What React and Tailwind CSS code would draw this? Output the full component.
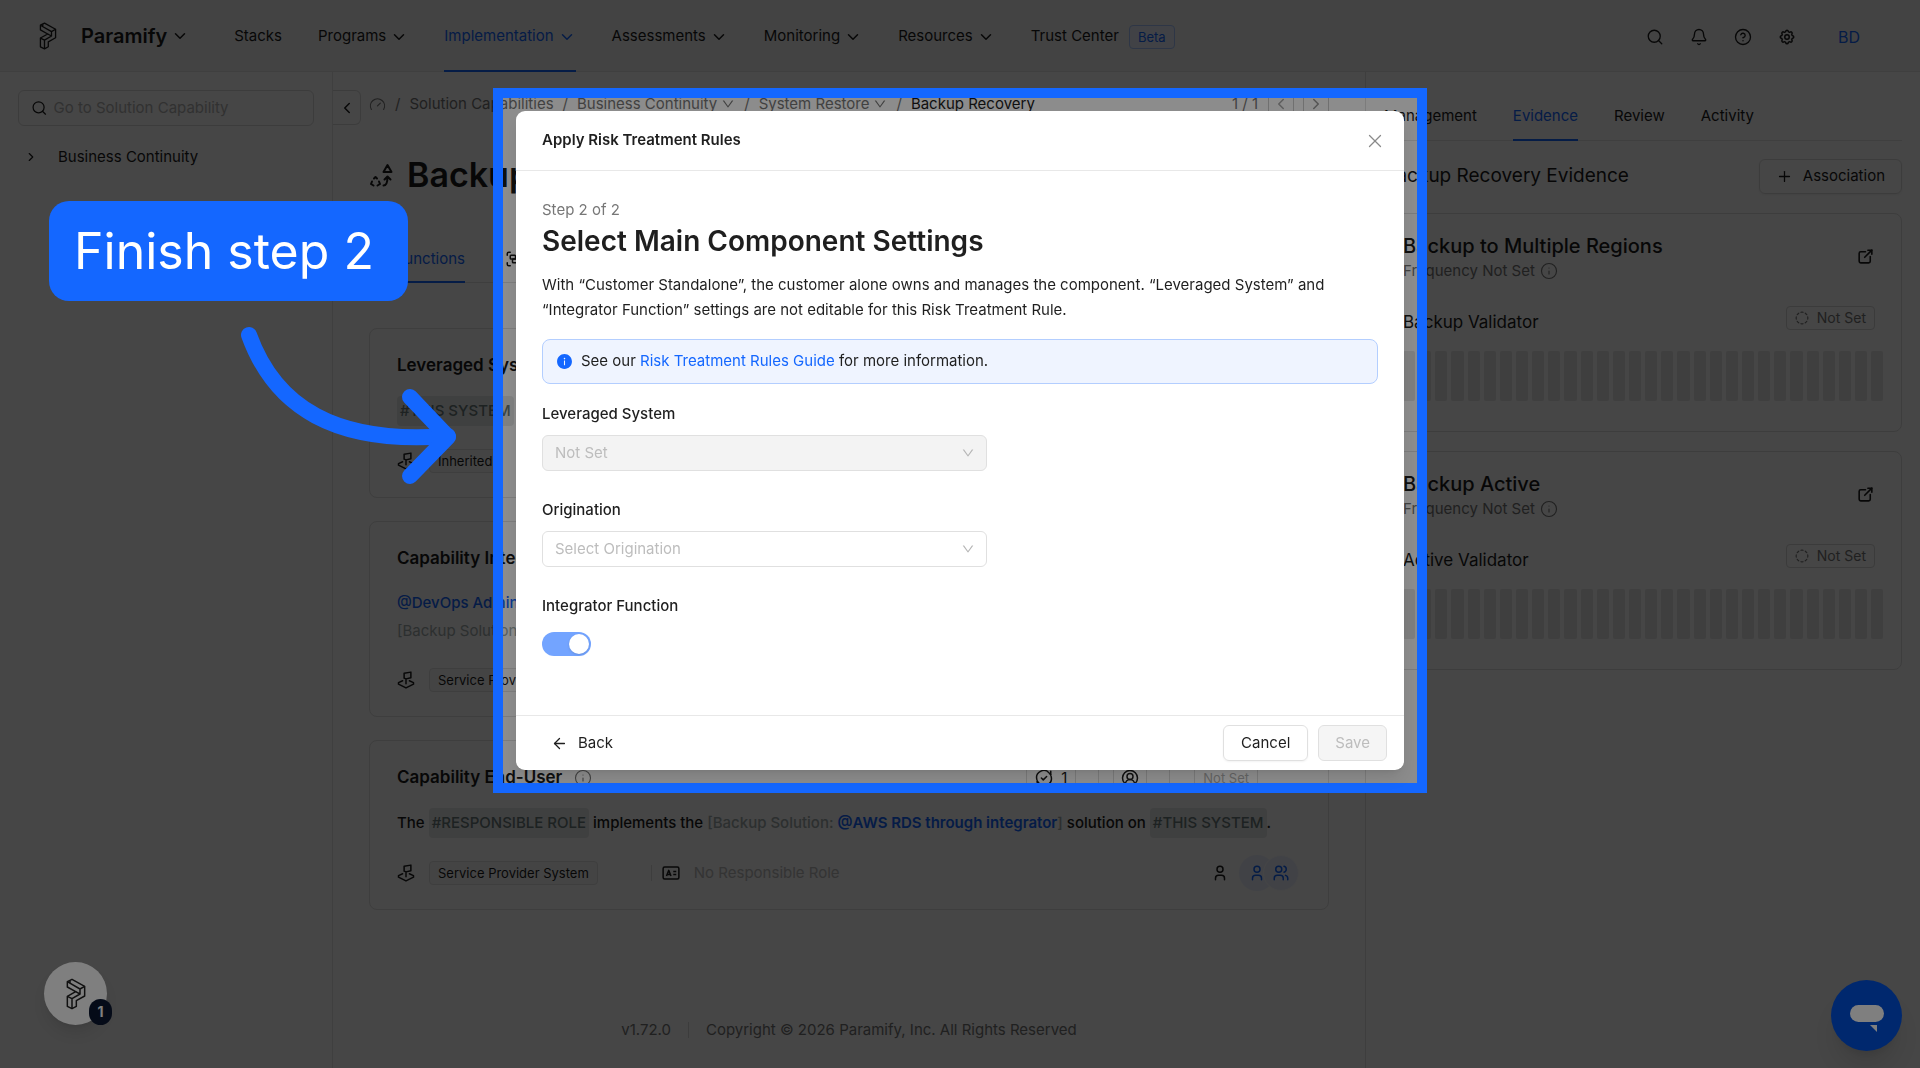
import {
  Bell,
  ChevronDown,
  ChevronLeft,
  ChevronRight,
  CircleDashed,
  CircleHelp,
  CircleUserRound,
  Gauge,
  Group,
  Info,
  Plus,
  Search,
  ArrowLeft,
  X,
} from "lucide-react";
import { AiFillInfoCircle, AiOutlineDown } from "react-icons/ai";
import { TbExternalLink, TbSettings, TbUser, TbUsers } from "react-icons/tb";

const NAV = [
  { label: "Stacks" },
  { label: "Programs", menu: true },
  { label: "Implementation", menu: true, active: true },
  { label: "Assessments", menu: true },
  { label: "Monitoring", menu: true },
  { label: "Resources", menu: true },
];

const EVIDENCE = [
  { title: "Backup to Multiple Regions", validator: "Backup Validator" },
  { title: "Backup Active", validator: "Active Validator" },
];

const BARS = Array.from({ length: 30 }, (_, i) => i);

const Logo = ({ className }) => (
  <svg
    viewBox="200 173 60 96"
    fill="none"
    stroke="currentColor"
    strokeWidth="4.5"
    strokeLinejoin="round"
    className={className}
  >
    <path d="M218 177 256 198V227L231 241V258L218 265 204 258V228L229 214 204 200V184Z" />
    <path d="M204 184 242 206 256 198M242 206V221L218 235 204 228M218 235V265M212 181 212 188M229 214 242 221" />
  </svg>
);

const HexFlag = () => (
  <svg
    viewBox="0 0 24 24"
    fill="none"
    stroke="currentColor"
    strokeWidth="2"
    strokeLinecap="round"
    strokeLinejoin="round"
    className="size-[18px] shrink-0"
  >
    <path d="M7.500 13 2 15.500V17.500L12 22.500 22 17.500V15.500L16.500 13" />
    <path d="M12 17V10.500L9.500 9.500V3L18.500 1.500V9L12 10.500" />
  </svg>
);

const ShapesIcon = () => (
  <svg
    viewBox="0 0 24 24"
    fill="none"
    stroke="currentColor"
    strokeWidth="2"
    strokeLinecap="round"
    strokeLinejoin="round"
    className="mr-1 size-6 shrink-0"
  >
    <path d="M18.500 2 22.500 9H14.500Z" />
    <path d="M5 15.500 6.500 14 8 15.500M3 18.500 2 21 4.500 22.500M10 18.500 11 21 8.500 22.500" />
    <path d="M14.500 22.500C18 22.500 18.500 19 18.500 14M15.500 16.500 18.500 13.500 21.500 16.500" />
  </svg>
);

const CycleCheck = () => (
  <svg
    viewBox="0 0 24 24"
    fill="none"
    stroke="currentColor"
    strokeWidth="2"
    strokeLinecap="round"
    strokeLinejoin="round"
    className="size-[18px]"
  >
    <path d="M2.500 14A9.500 9.500 0 0 1 19 5.500L21 8M21.500 10A9.500 9.500 0 0 1 5 18.500L3 16" />
    <path d="M21 3V8M3 21V16M8.500 12 11 14.500 15.500 10" />
  </svg>
);

const RoleCard = () => (
  <svg
    viewBox="0 0 24 24"
    fill="none"
    stroke="currentColor"
    strokeWidth="2"
    strokeLinejoin="round"
    className="size-[18px] shrink-0"
  >
    <rect x="1.500" y="4" width="21" height="16" rx="2" />
    <path d="M6 16 9 8.500 12 16M7 14H11M15 10H19M15 14H19" />
  </svg>
);

const Token = ({ children }) => (
  <span className="inline-block h-[30px] rounded bg-[#e8eaea] px-[3px] leading-[30px] text-[#6b7c7c]">
    {children}
  </span>
);

const Card = ({ title, info, tools, children, tag, extra }) => (
  <section className="rounded-lg border border-[#e2e2e2] px-[27px] pt-[23px] pb-6">
    <div className="flex h-7 items-center">
      <h3 className="text-[17px] font-semibold">{title}</h3>
      {info && <Info className="ml-3 size-[18px] text-[#777]" strokeWidth={1.5} />}
      {tools}
    </div>
    <div className="mt-4 font-medium leading-7">{children}</div>
    <div className="mt-[23px] flex h-6 items-center">
      <HexFlag />
      <span className="ml-[14px] rounded border border-[#e2e2e2] bg-[#fafafa] px-2 text-[13px] leading-[22px]">
        {tag}
      </span>
      {extra}
    </div>
  </section>
);

const CardTools = () => (
  <div className="mr-[43px] ml-auto flex items-center">
    <span className="flex h-[26px] items-center gap-2 rounded border border-[#ddd] px-2">
      <CycleCheck />1
    </span>
    <span className="ml-[22px] h-6 w-px bg-[#ddd]" />
    <span className="ml-[14px] flex h-[26px] items-center rounded border border-[#ddd] px-[7px]">
      <CircleUserRound className="size-[18px]" />
    </span>
    <span className="ml-[22px] h-6 w-px bg-[#ddd]" />
    <span className="ml-6 rounded border border-[#ddd] px-2 text-[13px] leading-6 text-[#b5b5b5]">
      Not Set
    </span>
  </div>
);

const RoleRow = () => (
  <>
    <span className="ml-[53px] h-4 w-px bg-[#e0e0e0]" />
    <span className="ml-2.5">
      <RoleCard />
    </span>
    <span className="ml-[14px] text-[15px] text-[#bdbdbd]">No Responsible Role</span>
    <TbUser className="mr-[10px] ml-auto size-[18px]" />
    <span className="flex size-9 items-center justify-center rounded-full bg-[#eef3ff] text-[#1467ff]">
      <TbUser className="size-[18px]" />
    </span>
    <span className="mr-0.5 -ml-3 flex size-9 items-center justify-center rounded-full border border-white bg-[#eef3ff] text-[#1467ff]">
      <TbUsers className="size-[18px]" />
    </span>
  </>
);

const Header = () => (
  <header className="flex h-[72px] shrink-0 items-center border-b border-[#e5e5e5] bg-[#f5f5f5] pl-[39px] pr-[60px]">
    <Logo className="h-7 w-[18px]" />
    <button className="ml-6 flex items-center gap-1 text-xl font-semibold">
      Paramify
      <ChevronDown className="size-[18px]" strokeWidth={2} />
    </button>
    <nav className="ml-[45px] flex items-stretch gap-9 self-stretch text-[15px]">
      {NAV.map((item) => (
        <a
          key={item.label}
          href="#"
          className={
            item.active
              ? "-mb-px flex items-center gap-1 border-b-2 border-[#1467ff] pt-[3px] text-[#1467ff]"
              : "flex items-center gap-1 pt-0.5"
          }
        >
          {item.label}
          {item.menu && <ChevronDown className="size-[18px]" />}
        </a>
      ))}
      <a href="#" className="flex items-center gap-2.5 pt-0.5">
        Trust Center
        <span className="rounded border border-[#a9c5ff] bg-[#edf3ff] px-2 text-[13px] leading-[22px] text-[#1467ff]">
          Beta
        </span>
      </a>
    </nav>
    <div className="ml-auto flex items-center gap-[26px] pt-0.5">
      <button aria-label="Search">
        <Search className="size-[18px]" strokeWidth={1.8} />
      </button>
      <button aria-label="Notifications">
        <Bell className="size-[18px]" strokeWidth={1.8} />
      </button>
      <button aria-label="Help">
        <CircleHelp className="size-[18px]" strokeWidth={1.8} />
      </button>
      <button aria-label="Settings">
        <TbSettings className="size-[18px]" />
      </button>
      <button className="ml-4 text-base text-[#1467ff]">BD</button>
    </div>
  </header>
);

const Sidebar = () => (
  <aside className="w-[333px] shrink-0 border-r border-[#e5e5e5] pt-[18px] pr-[18px] pl-[18px]">
    <label className="flex h-9 items-center gap-1.5 rounded-md border border-[#ddd] pl-3">
      <Search className="size-[18px]" strokeWidth={1.8} />
      <input
        type="text"
        aria-label="Go to Solution Capability"
        placeholder="Go to Solution Capability"
        className="w-full bg-transparent text-[15px] outline-none placeholder:text-[#b5b5b5]"
      />
    </label>
    <button className="mt-[19px] flex items-center gap-5 pl-1.5 text-[15px] leading-6">
      <ChevronRight className="size-[14px]" />
      Business Continuity
    </button>
  </aside>
);

const Breadcrumbs = () => (
  <div className="flex items-start pt-[18px] pr-9 text-[15px] text-[#777]">
    <button
      aria-label="Collapse sidebar"
      className="flex h-[35px] w-7 items-center justify-center rounded-r-md border border-l-0 border-[#ddd] text-[#1c1c1c]"
    >
      <ChevronLeft className="size-[18px]" />
    </button>
    <nav className="ml-2 flex h-7 items-center gap-[9px]">
      <Gauge className="size-[17px]" strokeWidth={1.6} />
      <span>/</span>
      <a href="#">Solution Capabilities</a>
      <span>/</span>
      <a href="#" className="flex items-center gap-1">
        Business Continuity <AiOutlineDown className="size-[14px]" />
      </a>
      <span>/</span>
      <a href="#" className="flex items-center gap-1">
        System Restore <AiOutlineDown className="size-[14px]" />
      </a>
      <span>/</span>
      <span className="text-[#1c1c1c]">Backup Recovery</span>
    </nav>
    <div className="ml-auto flex h-7 items-center">
      <span>1 / 1</span>
      <button aria-label="Previous" className="ml-2.5 flex size-[26px] items-center justify-center rounded border border-[#ccc] text-[#aaa]">
        <ChevronLeft className="size-[18px]" />
      </button>
      <button aria-label="Next" className="ml-[9px] flex size-[26px] items-center justify-center rounded border border-[#ccc] text-[#999]">
        <ChevronRight className="size-[18px]" />
      </button>
    </div>
  </div>
);

const EvidenceCard = ({ title, validator }) => (
  <section className="mb-[19px] rounded-lg border border-[#e0e0e0] px-[18px] pt-[19px] pb-[30px]">
    <div className="flex items-center pr-2">
      <div>
        <h3 className="text-xl font-medium leading-[26px]">{title}</h3>
        <p className="flex items-center gap-[5px] text-[15px] leading-6 text-[#777]">
          Frequency Not Set
          <Info className="size-[18px]" strokeWidth={1.5} />
        </p>
      </div>
      <button aria-label={"Open " + title} className="ml-auto -mt-1">
        <TbExternalLink className="size-[19px]" />
      </button>
    </div>
    <div className="mt-[23px] flex items-start pr-2">
      <p className="pt-1 text-[17px] leading-6">{validator}</p>
      <span className="ml-auto flex items-center gap-2 rounded border border-[#d9d9d9] px-2 text-sm leading-[22px] text-[#777]">
        <CircleDashed className="size-[14px]" />
        Not Set
      </span>
    </div>
    <div className="mt-[17px] flex h-[50px] gap-1">
      {BARS.map((bar) => (
        <span key={bar} className="flex-1 rounded-xs bg-[#e5e5e5]" />
      ))}
    </div>
  </section>
);

const Panel = () => (
  <aside className="w-[555px] shrink-0 border-l border-[#e2e2e2] pr-[18px] pl-[18px]">
    <div className="mt-4 flex h-[53px] gap-9 border-b border-[#e5e5e5] text-[15px]">
      <button className="pt-1">Management</button>
      <button className="-mb-px border-b-2 border-[#1467ff] pt-1.5 text-[#1467ff]">Evidence</button>
      <button className="pt-1">Review</button>
      <button className="pt-1">Activity</button>
    </div>
    <div className="mt-[18px] mb-[19px] flex items-center justify-between">
      <h2 className="text-[19px]">Backup Recovery Evidence</h2>
      <button className="flex h-[35px] items-center gap-2.5 rounded-md border border-[#ddd] px-4 text-[15px] shadow-xs">
        <Plus className="size-[17px]" strokeWidth={1.8} />
        Association
      </button>
    </div>
    {EVIDENCE.map((item) => (
      <EvidenceCard key={item.title} {...item} />
    ))}
  </aside>
);

const Main = () => (
  <main className="flex min-w-0 flex-1 flex-col">
    <Breadcrumbs />
    <div className="mt-[30px] flex h-10 items-center gap-2.5 px-9">
      <ShapesIcon />
      <h1 className="text-[34px] font-semibold leading-10">Backup Recovery</h1>
    </div>
    <div className="mx-9 mt-[38px] flex h-[50px] gap-10 border-b border-[#e2e2e2] text-[15px]">
      <button className="-mb-px flex items-center gap-2 border-b-2 border-[#1467ff] pt-1 text-[#1467ff]">
        <TbSettings className="size-[19px]" />
        Functions
      </button>
      <button className="flex items-center gap-2 pt-0.5">
        <Group className="size-[18px]" />
        Components
      </button>
    </div>
    <div className="mx-9 mt-[45px] flex flex-col gap-[23px] text-[15px]">
      <Card title="Leveraged System" tag="Inherited">
        <Token>#THIS SYSTEM</Token>
      </Card>
      <Card title="Capability Integrator" tag="Service Provider System">
        <p className="text-[#1467ff]">@DevOps Admin</p>
        <p className="font-normal text-[#a3adad]">[Backup Solution]</p>
      </Card>
      <Card
        title="Capability End-User"
        info
        tools={<CardTools />}
        tag="Service Provider System"
        extra={<RoleRow />}
      >
        <p>
          The <Token>#RESPONSIBLE ROLE</Token> implements the{" "}
          <span className="text-[#a3adad]">[Backup Solution: </span>
          <a href="#" className="font-semibold text-[#1467ff]">
            @AWS RDS through integrator
          </a>
          <span className="text-[#a3adad]">]</span> solution on <Token>#THIS SYSTEM</Token>.
        </p>
      </Card>
    </div>
    <footer className="mt-auto flex items-center justify-center gap-[17px] pb-[26px] text-[15px] leading-6 text-[#777]">
      <span>v1.72.0</span>
      <span className="h-4 w-px bg-[#ddd]" />
      <span>Copyright © 2026 Paramify, Inc. All Rights Reserved</span>
    </footer>
  </main>
);

const Widgets = () => (
  <>
    <button
      aria-label="Checklist"
      className="fixed bottom-[43px] left-[44px] flex size-[63px] items-center justify-center rounded-full bg-white text-[#222] shadow-lg"
    >
      <Logo className="h-8 w-5" />
      <span className="absolute -right-[5px] bottom-0 flex h-[26px] w-[23px] items-center justify-center rounded-full bg-[#0b1730] text-sm font-bold text-white">
        1
      </span>
    </button>
    <button
      aria-label="Chat"
      className="fixed right-[18px] bottom-[17px] flex size-[71px] items-center justify-center rounded-full bg-[#0050dc] shadow-xl"
    >
      <svg viewBox="0 0 34 28" className="mt-1.5 h-7 w-[34px] fill-white">
        <rect width="34" height="17" rx="8.500" />
        <path d="M20 20H27V27Z" />
      </svg>
    </button>
  </>
);

const Field = ({ id, label, placeholder, disabled }) => (
  <div className="mb-[27px]">
    <label htmlFor={id} className="block font-medium leading-6">
      {label}
    </label>
    <div className="mt-[9px] grid max-w-[445px] items-center">
      <select
        id={id}
        disabled={disabled}
        defaultValue=""
        className="col-start-1 row-start-1 h-9 appearance-none rounded-md border border-[#e0e0e0] bg-white px-3 text-[#bdbdbd] disabled:bg-[#f3f3f3]"
      >
        <option value="">{placeholder}</option>
      </select>
      <AiOutlineDown className="pointer-events-none col-start-1 row-start-1 mr-3 size-[14px] justify-self-end text-[#b5b5b5]" />
    </div>
  </div>
);

const RulesModal = () => (
  <div
    role="dialog"
    aria-label="Apply Risk Treatment Rules"
    className="overflow-hidden rounded-[9px] bg-white text-[15px] text-[#1f1f1f] shadow-lg"
  >
    <div className="flex h-[60px] items-center justify-between border-b border-[#e8e8e8] pr-[18px] pl-[26px]">
      <h2 className="font-semibold">Apply Risk Treatment Rules</h2>
      <button aria-label="Close">
        <X className="size-[22px] text-[#8a8a8a]" strokeWidth={1.4} />
      </button>
    </div>
    <div className="px-[26px] pt-[27px] pb-[59px]">
      <p className="leading-6 text-[#777]">Step 2 of 2</p>
      <h1 className="text-[28px] font-semibold leading-[38px]">Select Main Component Settings</h1>
      <p className="mt-3 leading-[25px]">
        With “Customer Standalone”, the customer alone owns and manages the component. “Leveraged
        System” and “Integrator Function” settings are not editable for this Risk Treatment Rule.
      </p>
      <div className="mt-[17px] mb-[18px] flex h-[45px] items-center gap-2 rounded-lg border border-[#b3ceff] bg-[#eff4ff] px-[13px]">
        <AiFillInfoCircle className="size-[17px] text-[#1467ff]" />
        <span>
          See our{" "}
          <a href="#" className="text-[#1467ff]">
            Risk Treatment Rules Guide
          </a>{" "}
          for more information.
        </span>
      </div>
      <Field id="leveraged" label="Leveraged System" placeholder="Not Set" disabled />
      <Field id="origination" label="Origination" placeholder="Select Origination" />
      <label htmlFor="integrator" className="block font-medium leading-6">
        Integrator Function
      </label>
      <div className="mt-[14px] grid w-[49px] items-center">
        <input
          id="integrator"
          type="checkbox"
          role="switch"
          defaultChecked
          disabled
          className="col-start-1 row-start-1 h-6 w-[49px] appearance-none rounded-full bg-[#73a4ff]"
        />
        <span className="pointer-events-none col-start-1 row-start-1 mr-0.5 size-5 justify-self-end rounded-full bg-white shadow-sm" />
      </div>
    </div>
    <div className="flex h-[55px] items-center border-t border-[#e8e8e8] pr-[17px] pl-[35px]">
      <button className="flex items-center gap-2.5">
        <ArrowLeft className="size-[17px]" strokeWidth={1.8} />
        Back
      </button>
      <button className="ml-auto h-9 rounded-md border border-[#e0e0e0] px-[17px] shadow-xs">
        Cancel
      </button>
      <button disabled className="ml-2.5 h-9 rounded-md border border-[#e0e0e0] bg-[#f5f5f5] px-4 text-[#bdbdbd]">
        Save
      </button>
    </div>
  </div>
);

const Callout = () => (
  <>
    <div className="fixed top-[201px] left-[49px] rounded-[20px] bg-[#1467ff] pr-[34px] pl-[25px] text-[50px] leading-[100px] text-white">
      Finish step 2
    </div>
    <svg
      viewBox="0 0 230 170"
      fill="none"
      stroke="#1467ff"
      strokeWidth="16"
      strokeLinecap="round"
      strokeLinejoin="round"
      className="fixed top-[320px] left-[235px] h-[170px] w-[230px]"
    >
      <path d="M14 15C40 87 100 125 213 116" />
      <path d="M175 77 213 117 175 156" />
    </svg>
  </>
);

export default function App() {
  return (
    <div className="font-[Inter,sans-serif] text-[#1c1c1c]">
      <div className="flex min-h-screen flex-col bg-white">
        <Header />
        <div className="flex flex-1">
          <Sidebar />
          <Main />
          <Panel />
        </div>
      </div>
      <div className="fixed inset-0 bg-black/45" />
      <Widgets />
      <div className="fixed inset-0 flex items-start justify-center overflow-hidden pt-[88px]">
        <div className="w-full max-w-[934px] border-10 border-[#1467ff] p-[13px] shadow-[0_0_0_2000px_rgba(0,0,0,0.5)]">
          <RulesModal />
        </div>
      </div>
      <Callout />
    </div>
  );
}
